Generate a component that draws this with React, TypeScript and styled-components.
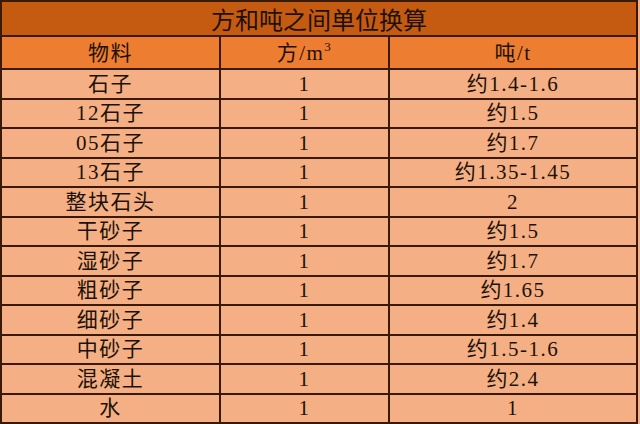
import styled, { createGlobalStyle } from "styled-components";

const ROWS = [
    { name: "石子", vol: "1", ton: "约1.4-1.6" },
    { name: "12石子", vol: "1", ton: "约1.5" },
    { name: "05石子", vol: "1", ton: "约1.7" },
    { name: "13石子", vol: "1", ton: "约1.35-1.45" },
    { name: "整块石头", vol: "1", ton: "2" },
    { name: "干砂子", vol: "1", ton: "约1.5" },
    { name: "湿砂子", vol: "1", ton: "约1.7" },
    { name: "粗砂子", vol: "1", ton: "约1.65" },
    { name: "细砂子", vol: "1", ton: "约1.4" },
    { name: "中砂子", vol: "1", ton: "约1.5-1.6" },
    { name: "混凝土", vol: "1", ton: "约2.4" },
    { name: "水", vol: "1", ton: "1" },
];

const GlobalStyle = createGlobalStyle`
    html, body {
        margin: 0;
        padding: 0;
        background: #f4b084;
    }
`;

const Table = styled.table`
    width: 638px;
    height: 424px;
    border-collapse: collapse;
    table-layout: fixed;
    font-family: "Liberation Serif", "Noto Sans CJK SC", serif;
    color: #1d1108;
`;

const TitleCell = styled.th`
    height: 33px;
    padding: 0;
    background: #c55a11;
    border: 2px solid #3a1a06;
    font-family: "Noto Sans CJK SC", sans-serif;
    font-weight: 400;
    font-size: 24px;
    line-height: 30px;
    text-align: center;
`;

const HeadCell = styled.th`
    height: 31px;
    padding: 0;
    background: #ed7d31;
    border: 2px solid #3a1a06;
    font-weight: 400;
    font-size: 21px;
    letter-spacing: 1.5px;
    line-height: 28px;
    text-align: center;
`;

const Cell = styled.td`
    height: 27px;
    padding: 0;
    background: #f4b084;
    border: 2px solid #3a1a06;
    font-size: 21px;
    letter-spacing: 1.5px;
    line-height: 26px;
    text-align: center;
    white-space: nowrap;
`;

const Sup = styled.sup`
    font-size: 13px;
    line-height: 0;
    vertical-align: 9px;
`;

export default function App() {
    return (
        <>
            <GlobalStyle />
            <Table>
                <colgroup>
                    <col style={{ width: 219 }} />
                    <col style={{ width: 169 }} />
                    <col />
                </colgroup>
                <thead>
                    <tr>
                        <TitleCell colSpan={3}>方和吨之间单位换算</TitleCell>
                    </tr>
                    <tr>
                        <HeadCell>物料</HeadCell>
                        <HeadCell>
                            方/m<Sup>3</Sup>
                        </HeadCell>
                        <HeadCell>吨/t</HeadCell>
                    </tr>
                </thead>
                <tbody>
                    {ROWS.map((row) => (
                        <tr key={row.name}>
                            <Cell>{row.name}</Cell>
                            <Cell>{row.vol}</Cell>
                            <Cell>{row.ton}</Cell>
                        </tr>
                    ))}
                </tbody>
            </Table>
        </>
    );
}
